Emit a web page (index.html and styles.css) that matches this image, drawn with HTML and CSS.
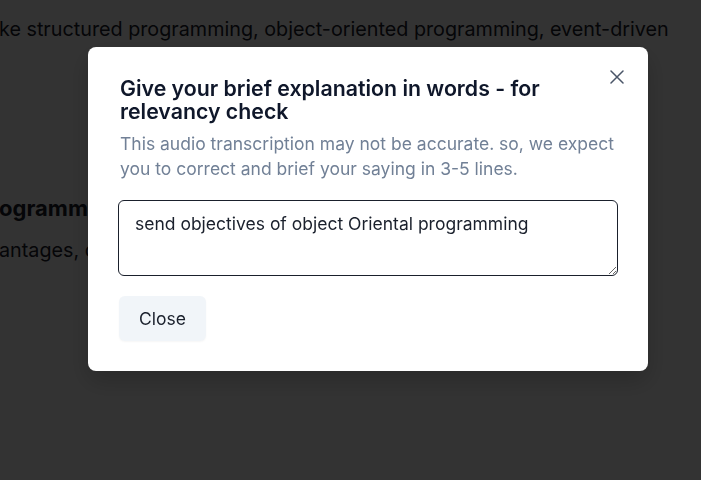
FILE: index.html
```html
<!DOCTYPE html>
<html>
<head>
<meta charset="utf-8">
<link rel="stylesheet" href="styles.css">
</head>
<body>
<div class="page">
  <p class="line">ke structured programming, object-oriented programming, event-driven</p>
  <h2 class="heading">ogramming paradigms</h2>
  <p class="line line-2">antages, disadvantages and use cases</p>
</div>
<div class="overlay">
  <div class="modal">
    <button class="close-x" aria-label="Close">
      <svg width="14" height="14" viewBox="0 0 14 14"><path d="M1 1L13 13M13 1L1 13" stroke="currentColor" stroke-width="1.5" stroke-linecap="round"/></svg>
    </button>
    <h1 class="title">Give your brief explanation in words - for relevancy check</h1>
    <p class="desc">This audio transcription may not be accurate. so, we expect you to correct and brief your saying in 3-5 lines.</p>
    <textarea class="input">send objectives of object Oriental programming</textarea>
    <div class="actions"><button class="btn">Close</button></div>
  </div>
</div>
</body>
</html>
```
FILE: styles.css
```css
* { box-sizing: border-box; }
html, body { margin: 0; padding: 0; }
body {
  width: 701px; height: 480px; overflow: hidden;
  font-family: Inter, "Noto Sans", sans-serif;
  background: #fff; color: #1a202c;
}
.page { padding-top: 16px; margin-left: -1px; white-space: nowrap; }
.line { margin: 0; font-size: 19.75px; line-height: 26px; }
.heading { margin: 0; margin-top: 151px; font-size: 22px; font-weight: 700; line-height: 30px; }
.line-2 { margin-top: 14px; }
.overlay {
  position: fixed; inset: 0;
  background: rgba(0,0,0,0.8);
  display: flex; justify-content: flex-start; align-items: flex-start;
  padding: 47px 0 0 88px;
}
.modal {
  position: relative;
  width: 560px; height: 324px;
  background: #fff; border-radius: 8px;
  padding: 30px 30px 30px 32px;
  box-shadow: 0 10px 25px rgba(0,0,0,0.2);
}
.close-x {
  position: absolute; top: 16px; right: 17px;
  width: 28px; height: 28px;
  border: none; background: none; padding: 0; color: #4a5568;
  display: flex; align-items: center; justify-content: center;
}
.title {
  margin: 0; font-size: 21.3px; font-weight: 600; line-height: 23px;
  color: #0f172a; padding-right: 60px;
}
.desc {
  margin: 8px 0 0; font-size: 17.5px; line-height: 25px; color: #718096;
}
.input {
  display: block; margin: 19px 0 0 -2px; width: 500px; height: 76px;
  border: 1px solid #1a202c; border-radius: 6px;
  padding: 11px 16px; resize: vertical;
  font-family: Inter, "Noto Sans", sans-serif; font-size: 17.5px; line-height: 24px; color: #1a202c;
}
.actions { margin-top: 20px; }
.btn {
  font-family: Inter, "Noto Sans", sans-serif;
  width: 87px; height: 45px; margin-left: -1px;
  background: #f1f5f9; border: none; border-radius: 6px;
  font-size: 17.5px; color: #1a202c;
  box-shadow: 0 1px 2px rgba(0,0,0,0.04);
}
```
